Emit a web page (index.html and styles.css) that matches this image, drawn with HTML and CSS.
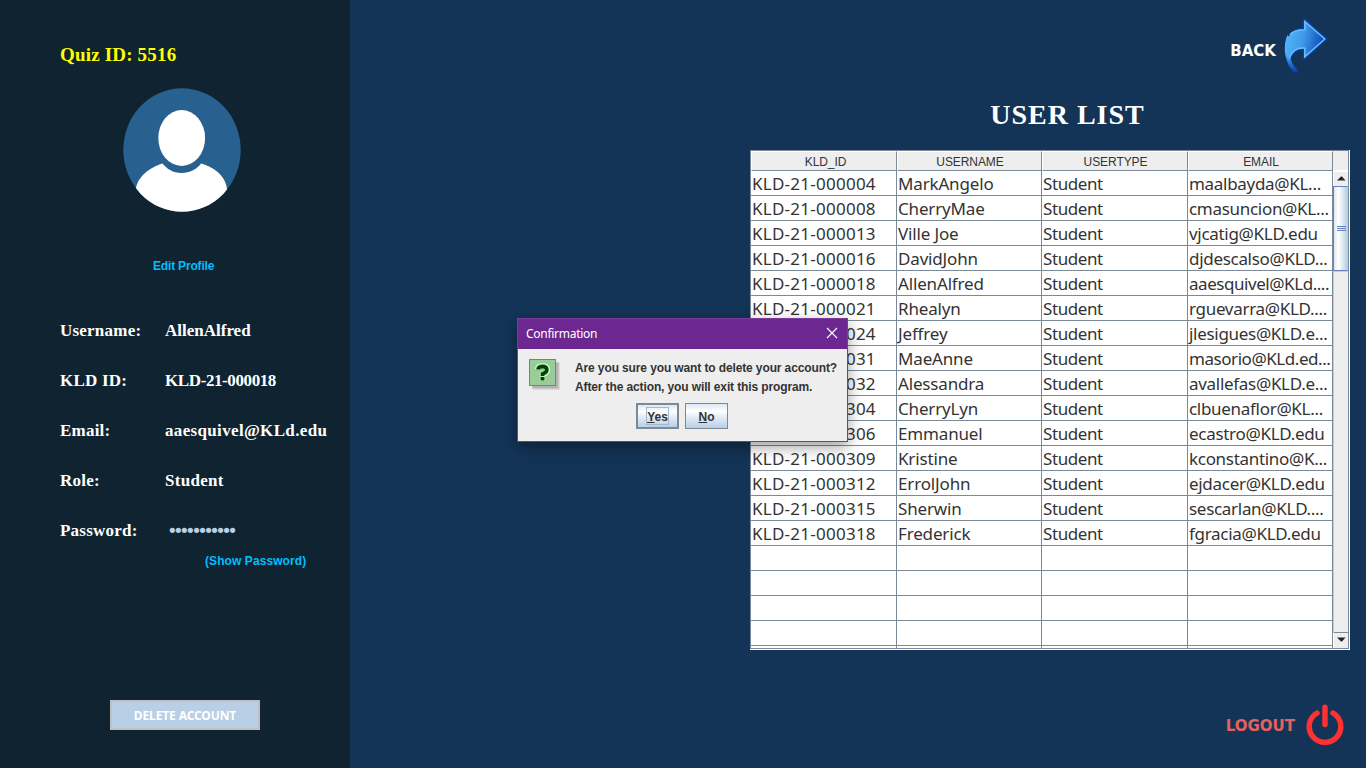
FILE: index.html
```html
<!DOCTYPE html>
<html lang="en">
<head>
<meta charset="utf-8">
<title>User List</title>
<link rel="stylesheet" href="styles.css">
</head>
<body>
<div class="app">
  <aside class="sidebar">
    <h2 class="quiz">Quiz ID: 5516</h2>
    <svg class="avatar" width="118" height="124" viewBox="0 0 118 124">
      <defs><clipPath id="disc"><ellipse cx="59" cy="62" rx="58.7" ry="61.7"/></clipPath></defs>
      <ellipse cx="59" cy="62" rx="58.7" ry="61.7" fill="#28608f"/>
      <g clip-path="url(#disc)" fill="#fff">
        <ellipse cx="58.7" cy="50" rx="23.4" ry="28"/>
        <path d="M39.5 75.5C44 81 50 85 58.5 85S74 81 78 75.5C92 79 104 90 104 102L104 124H13V102C13 90 27 79 39.5 75.5Z"/>
      </g>
    </svg>
    <a class="link edit">Edit Profile</a>
    <dl class="info">
      <dt class="k1">Username:</dt><dd class="v1">AllenAlfred</dd>
      <dt class="k2">KLD ID:</dt><dd class="v2">KLD-21-000018</dd>
      <dt class="k3">Email:</dt><dd class="v3">aaesquivel@KLd.edu</dd>
      <dt class="k4">Role:</dt><dd class="v4">Student</dd>
      <dt class="k5">Password:</dt><dd class="dots">•••••••••••</dd>
    </dl>
    <a class="link show">(Show Password)</a>
    <button class="delete">DELETE ACCOUNT</button>
  </aside>

  <main class="main">
    <div class="back"><span>BACK</span>
      <svg width="44" height="56" viewBox="0 0 44 56">
        <defs>
          <linearGradient id="arrow" x1="0" x2="1" y1=".3" y2=".5"><stop offset="0" stop-color="#50b6fb"/><stop offset=".45" stop-color="#409be9"/><stop offset="1" stop-color="#0a41b4"/></linearGradient>
          <linearGradient id="tail" gradientUnits="userSpaceOnUse" x1="3" x2="12" y1="30" y2="54"><stop offset="0" stop-color="#54bafa"/><stop offset=".4" stop-color="#2a8be4"/><stop offset="1" stop-color="#0836a8"/></linearGradient>
        </defs>
        <path d="M3.500 16C0 24 0 34 3 42 5 48 8 52 12 54.500 14 54.500 14.500 53 14 51.500 9 46 6 42 7 36L12 30Z" fill="url(#tail)"/>
        <path d="M20.500 10.500V2L41.500 20 20.500 38.500V29.500C12 28.500 8 32 5.500 41 3.500 40 1 36 1.200 28 1.500 17 8 10.500 20.500 10.500Z" fill="url(#arrow)"/>
        <path d="M10 11.500C13 10 16 9.500 19.500 9.500V1L21.500.8 42.500 20 21.500 39.200 19.500 38.500V30.500C14 30 10 32 7.500 37" fill="none" stroke="#0a3eac" stroke-width="1.400"/>
        <path d="M6 15.500C10 11.200 15 10.800 20.800 10.800V2.500L40.800 20 20.800 37.800V29.200C14 28.500 9 31 6 38" fill="none" stroke="#66c0fc" stroke-width="1.500"/>
      </svg>
    </div>
    <h1 class="title">USER LIST</h1>
    <div class="pane">
      <div class="view">
        <div class="row head"><span>KLD_ID</span><span>USERNAME</span><span>USERTYPE</span><span>EMAIL</span></div>
        <div class="row"><span>KLD-21-000004</span><span>MarkAngelo</span><span>Student</span><span>maalbayda@KL...</span></div>
        <div class="row"><span>KLD-21-000008</span><span>CherryMae</span><span>Student</span><span>cmasuncion@KL...</span></div>
        <div class="row"><span>KLD-21-000013</span><span>Ville Joe</span><span>Student</span><span>vjcatig@KLD.edu</span></div>
        <div class="row"><span>KLD-21-000016</span><span>DavidJohn</span><span>Student</span><span>djdescalso@KLD...</span></div>
        <div class="row"><span>KLD-21-000018</span><span>AllenAlfred</span><span>Student</span><span class="tight">aaesquivel@KLd....</span></div>
        <div class="row"><span>KLD-21-000021</span><span>Rhealyn</span><span>Student</span><span>rguevarra@KLD....</span></div>
        <div class="row"><span>KLD-21-000024</span><span>Jeffrey</span><span>Student</span><span>jlesigues@KLD.e...</span></div>
        <div class="row"><span>KLD-21-000031</span><span>MaeAnne</span><span>Student</span><span class="tight">masorio@KLd.ed...</span></div>
        <div class="row"><span>KLD-21-000032</span><span>Alessandra</span><span>Student</span><span>avallefas@KLD.e...</span></div>
        <div class="row"><span>KLD-21-000304</span><span>CherryLyn</span><span>Student</span><span>clbuenaflor@KL...</span></div>
        <div class="row"><span>KLD-21-000306</span><span>Emmanuel</span><span>Student</span><span>ecastro@KLD.edu</span></div>
        <div class="row"><span>KLD-21-000309</span><span>Kristine</span><span>Student</span><span>kconstantino@K...</span></div>
        <div class="row"><span>KLD-21-000312</span><span>ErrolJohn</span><span>Student</span><span>ejdacer@KLD.edu</span></div>
        <div class="row"><span>KLD-21-000315</span><span>Sherwin</span><span>Student</span><span>sescarlan@KLD....</span></div>
        <div class="row"><span>KLD-21-000318</span><span>Frederick</span><span>Student</span><span>fgracia@KLD.edu</span></div>
        <div class="row"><span></span><span></span><span></span><span></span></div>
        <div class="row"><span></span><span></span><span></span><span></span></div>
        <div class="row"><span></span><span></span><span></span><span></span></div>
        <div class="row"><span></span><span></span><span></span><span></span></div>
        <div class="row"><span></span><span></span><span></span><span></span></div>
      </div>
      <div class="bar">
        <div class="corner"></div>
        <div class="arrow up"><svg width="9" height="5"><path d="M0 4.500L4 .5h1L8.500 4.500Z" fill="#222"/></svg></div>
        <div class="thumb"><i></i><i></i><i></i></div>
        <div class="track"></div>
        <div class="arrow down"><svg width="9" height="5"><path d="M0 .5L4 4.500h1L8.500 .5Z" fill="#222"/></svg></div>
      </div>
    </div>
    <div class="logout"><span>LOGOUT</span>
      <svg width="38" height="42" viewBox="0 0 38 42" fill="none" stroke="#ff3131" stroke-width="5.400" stroke-linecap="round">
        <path d="M11 9A15.800 15.800 0 1 0 27 9"/><path d="M19 3.200V20.500"/>
      </svg>
    </div>
  </main>
</div>

<div class="dialog">
  <div class="bar-title"><span>Confirmation</span>
    <svg width="12" height="12" viewBox="0 0 12 12"><path d="M1 1L11 11M11 1L1 11" stroke="#fff" stroke-width="1.200"/></svg>
  </div>
  <div class="content">
    <div class="ask">
      <svg class="question" width="34" height="34" viewBox="0 0 34 34">
        <rect x="4" y="4" width="27" height="27" fill="#000" opacity=".08"/><rect x="3" y="3" width="26.500" height="26.500" fill="#000" opacity=".18"/>
        <rect x=".5" y=".5" width="26" height="26" fill="#9c9" stroke="#669066"/>
        <g fill="none" stroke="#cfc" stroke-width="5.500"><path d="M8.500 10.500Q9 7 13.500 7T18.300 10.500 13.500 15.500V17"/><path d="M13.500 17.500V22"/></g>
        <path d="M9 10.500Q9.500 7.500 13.500 7.500T17.800 10.500 13.500 15V17" fill="none" stroke="#004500" stroke-width="3.800"/><path d="M11.500 18h4v3.500h-4Z" fill="#004500"/>
      </svg>
      <div class="msg"><p>Are you sure you want to delete your account?</p><p>After the action, you will exit this program.</p></div>
    </div>
    <div class="actions"><button class="yes"><span><u>Y</u>es</span></button><button class="no"><span><u>N</u>o</span></button></div>
  </div>
</div>
</body>
</html>
```
FILE: styles.css
```css
* { box-sizing: border-box; }
body { margin: 0; overflow: hidden; font-family: "Liberation Sans", Arial, sans-serif; }
h1, h2, p, dl, dd { margin: 0; }
span, a, dt, dd, p, h1, h2 { white-space: pre; }
.app { display: flex; width: 1366px; height: 768px; background: #133457; }
.sidebar { width: 350px; background: #0f2330; display: flex; flex-direction: column; align-items: flex-start; }
.quiz { margin: 43px 0 0 60px; height: 24px; font: bold 19px/24px "Liberation Serif", serif; color: #ff0; letter-spacing: .18px; }
.avatar { margin: 21px 0 0 123.4px; display: block; }
.link { font-weight: bold; font-size: 12px; line-height: 14px; color: #00bfff; }
.edit { margin: 47px 0 0 153px; letter-spacing: -.18px; }
.info { margin: 33px 0 0 60px; display: grid; grid-template-columns: 105px auto; grid-auto-rows: 50px; align-items: center; color: #fff; font: bold 17px/24px "Liberation Serif", serif; }
.k1, .k2, .k3, .k4, .k5 { letter-spacing: .22px; }
.v2 { letter-spacing: -.4px; }
.v3 { letter-spacing: .34px; }
.v4 { letter-spacing: .3px; }
.dots { color: #b8cfe5; font: 18px/24px "DejaVu Sans", sans-serif; padding-left: 2px; letter-spacing: -4.580px; }
.show { margin: -2px 0 0 205px; letter-spacing: .08px; }
.delete { margin: 132px 0 0 110px; width: 150px; height: 30px; padding: 0; border: 2px solid #c0c0c0; background: #b8cfe5; color: #fff; font: bold 12px "Noto Sans", sans-serif; letter-spacing: -.12px; }
.main { flex: 1; padding: 19px 16px 0 400px; display: flex; flex-direction: column; }
.back { height: 56px; display: flex; justify-content: flex-end; align-items: center; gap: 8px; margin-right: 22px; color: #fff; font: bold 15px "DejaVu Sans", sans-serif; }
.back span { padding-top: 8px; }
.title { margin: 22px 0 0; padding-left: 35px; height: 36px; text-align: center; color: #fff; font: bold 28px/36px "Liberation Serif", serif; letter-spacing: 1px; }
.pane { margin-top: 17px; width: 600px; height: 500px; display: flex; background: #fff; border-right: 1px solid #fff; border-bottom: 1px solid #fff; }
.view { width: 583px; height: 499px; overflow: hidden; border: solid #7a8a99; border-width: 1px 0 1px 1px; }
.row { height: 25px; display: grid; grid-template-columns: 146px 145px 146px 145px; color: #333; font: 17px/25px "Noto Sans", sans-serif; }
.row span { border-right: 1px solid #7a8a99; border-bottom: 1px solid #7a8a99; padding-left: 1px; overflow: hidden; letter-spacing: -.16px; }
.row span:first-child { letter-spacing: .25px; }
.row span:nth-child(3) { letter-spacing: -.4px; }
.row span:nth-child(4) { letter-spacing: -.3px; }
.row .tight:nth-child(4) { letter-spacing: -.45px; }
.row.head { height: 20px; font: 12px/20px "Liberation Sans", sans-serif; text-align: center; background: #eee; }
.row.head span { padding: 0 0 0 3px; border-left: 1px solid #fff; border-top: 1px solid #fff; letter-spacing: -.08px; }
.row.head span:nth-child(n+2) { padding-left: 1px; }
.bar { width: 16px; height: 499px; border: 1px solid #7a8a99; border-left: 0; background: #eee; display: flex; flex-direction: column; }
.corner { height: 20px; border-bottom: 1px solid #fff; }
.arrow { height: 15px; border-top: 1px solid #fff; border-left: 1px solid #fff; display: flex; align-items: center; justify-content: center; padding-bottom: 2px; }
.thumb { height: 85px; border: 1px solid #6382bf; border-right-color: #b8cfe5; background: linear-gradient(90deg, #dde8f3, #fff 35%, #b8cfe5); display: flex; flex-direction: column; align-items: center; justify-content: center; gap: 1px; padding-left: 2px; }
.thumb i { width: 9px; height: 1px; background: #6382bf; }
.track { flex: 1; border-top: 1px solid #b8cfe5; border-left: 1px solid #b8cfe5; }
.down { height: 16px; border-top: 1px solid #7a8a99; }
.logout { margin: 54px 6px 0 0; height: 42px; display: flex; align-items: center; justify-content: flex-end; gap: 11px; color: #e66060; font: bold 15px "DejaVu Sans", sans-serif; }
.logout span { padding-top: 2px; }
.dialog { position: absolute; left: 517px; top: 318px; width: 331px; height: 124px; border: 1px solid #7b3a9c; background: #eee; box-shadow: 0 5px 14px rgba(0,0,0,.38); }
.bar-title { height: 30px; padding: 0 9px 2px 8px; background: #6c2890; color: #fff; display: flex; justify-content: space-between; align-items: center; font: 12px "Noto Sans", sans-serif; letter-spacing: -.28px; }
.content { padding: 10px 0 0 11px; }
.ask { display: flex; gap: 12px; height: 43px; color: #333; font-size: 12px; font-weight: bold; line-height: 19px; letter-spacing: -.12px; }
.question { flex: none; }
.actions { display: flex; gap: 6px; margin: 1px 0 0 107px; }
.actions button { width: 43px; height: 26px; padding: 0; border: 1px solid #7a8a99; background: linear-gradient(#dde8f3, #fff 30%, #dde8f3 60%, #b8cfe5); color: #333; font: bold 12px "Liberation Sans", sans-serif; }
.actions .yes { border-width: 2px; }
.actions span { display: inline-block; height: 18px; line-height: 18px; border: 1px solid transparent; }
.actions .yes span { border-color: #a3b8cc; }
```
